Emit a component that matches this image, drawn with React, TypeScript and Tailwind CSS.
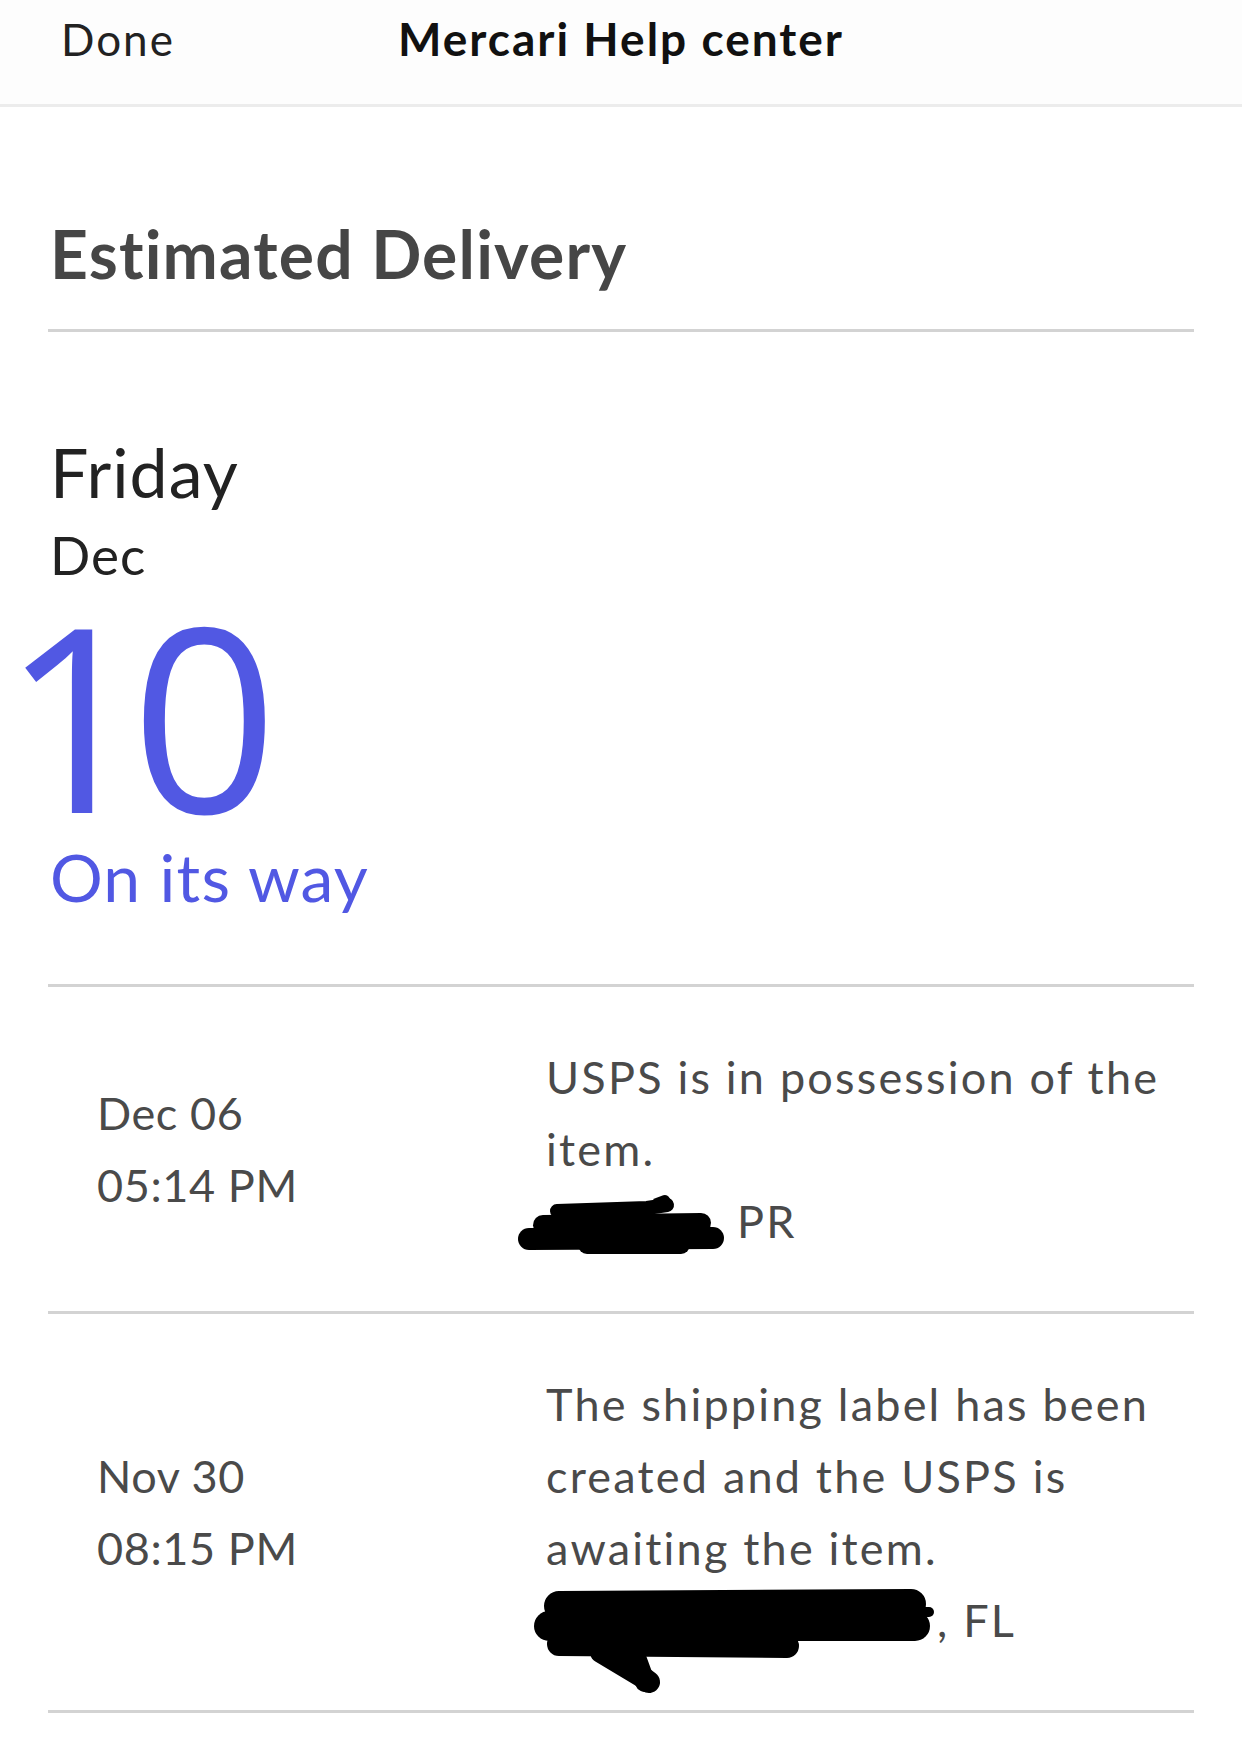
import React from 'react';

// Tracking events shown under the estimated delivery
interface TrackingEvent {
  date: string;
  time: string;
  message: string;
  place: string;
  blot: 'short' | 'long';
}

const EVENTS: TrackingEvent[] = [
  {
    date: 'Dec 06',
    time: '05:14 PM',
    message: 'USPS is in possession of the item.',
    place: 'PR',
    blot: 'short',
  },
  {
    date: 'Nov 30',
    time: '08:15 PM',
    message: 'The shipping label has been created and the USPS is awaiting the item.',
    place: ', FL',
    blot: 'long',
  },
];

function ShortBlot() {
  return (
    <svg width="206" height="56" viewBox="0 0 206 56" className="-ml-[29px] mr-[14px] shrink-0 overflow-visible">
      <g stroke="#000" strokeLinecap="round" strokeLinejoin="round" fill="none">
        <path d="M12 46 L196 45" strokeWidth="22" />
        <path d="M26 32 L184 30" strokeWidth="20" />
        <path d="M40 18 L130 15 L150 12" strokeWidth="14" />
        <path d="M140 10 L148 7" strokeWidth="10" />
        <path d="M70 52 L164 52" strokeWidth="18" />
      </g>
    </svg>
  );
}

function LongBlot() {
  return (
    <svg width="400" height="72" viewBox="0 0 400 72" className="-ml-[9px] shrink-0 overflow-visible">
      <g stroke="#000" strokeLinecap="round" strokeLinejoin="round" fill="none">
        <path d="M22 22 L374 20" strokeWidth="30" />
        <path d="M12 42 L378 42" strokeWidth="30" />
        <path d="M22 60 L250 62" strokeWidth="24" />
        <path d="M64 68 L104 92 L112 98" strokeWidth="22" />
        <path d="M100 76 L108 98" strokeWidth="20" />
        <path d="M380 28 L392 28" strokeWidth="10" />
      </g>
    </svg>
  );
}

export default function App() {
  return (
    <div className="w-[1242px] min-h-[1745px] bg-white font-['Lato','Liberation_Sans',sans-serif]">
      {/* Top bar */}
      <div className="h-[107px] border-b-[3px] border-[#ececec] bg-[#fdfdfd] pt-[16px]">
        <div className="grid grid-cols-[1fr_auto_1fr] items-baseline">
          <div className="pl-[61px] text-[44px] leading-none tracking-[2px] text-[#222]">Done</div>
          <div className="text-[46px] font-bold leading-none tracking-[2px] text-[#111]">Mercari Help center</div>
          <div />
        </div>
      </div>

      <div className="px-[48px]">
        <h1 className="mt-[114px] pl-[2px] text-[66px] font-bold leading-none tracking-[1.2px] text-[#464646]">
          Estimated Delivery
        </h1>
        <div className="mt-[42px] h-[3px] bg-[#d3d3d3]" />

        {/* Delivery date */}
        <div className="mt-[106px] pl-[2px] text-[68px] leading-none tracking-[1px] text-[#222]">Friday</div>
        <div className="mt-[22px] pl-[2px] text-[53px] leading-none tracking-[1px] text-[#222]">Dec</div>
        <div className="mt-[4px] -ml-[46px] font-['Open_Sans',sans-serif] text-[257px] leading-none tracking-[-18px] text-[#5158e3]">
          10
        </div>
        <div className="mt-[2px] pl-[2px] text-[66px] leading-none tracking-[1.2px] text-[#5158e3]">On its way</div>
        <div className="mt-[74px] h-[3px] bg-[#d3d3d3]" />

        {/* Tracking history */}
        {EVENTS.map((ev) => (
          <div key={ev.date}>
            <div className="grid grid-cols-[498px_1fr] items-center py-[54px] text-[45px] leading-[72px] text-[#4a4a4a]">
              <div className="pl-[49px] tracking-[0.6px]">
                <div>{ev.date}</div>
                <div>{ev.time}</div>
              </div>
              <div className="tracking-[2.2px]">
                <div>{ev.message}</div>
                <div className="flex items-center">
                  {ev.blot === 'short' ? <ShortBlot /> : <LongBlot />}
                  <span>{ev.place}</span>
                </div>
              </div>
            </div>
            <div className="h-[3px] bg-[#d3d3d3]" />
          </div>
        ))}
      </div>
    </div>
  );
}
